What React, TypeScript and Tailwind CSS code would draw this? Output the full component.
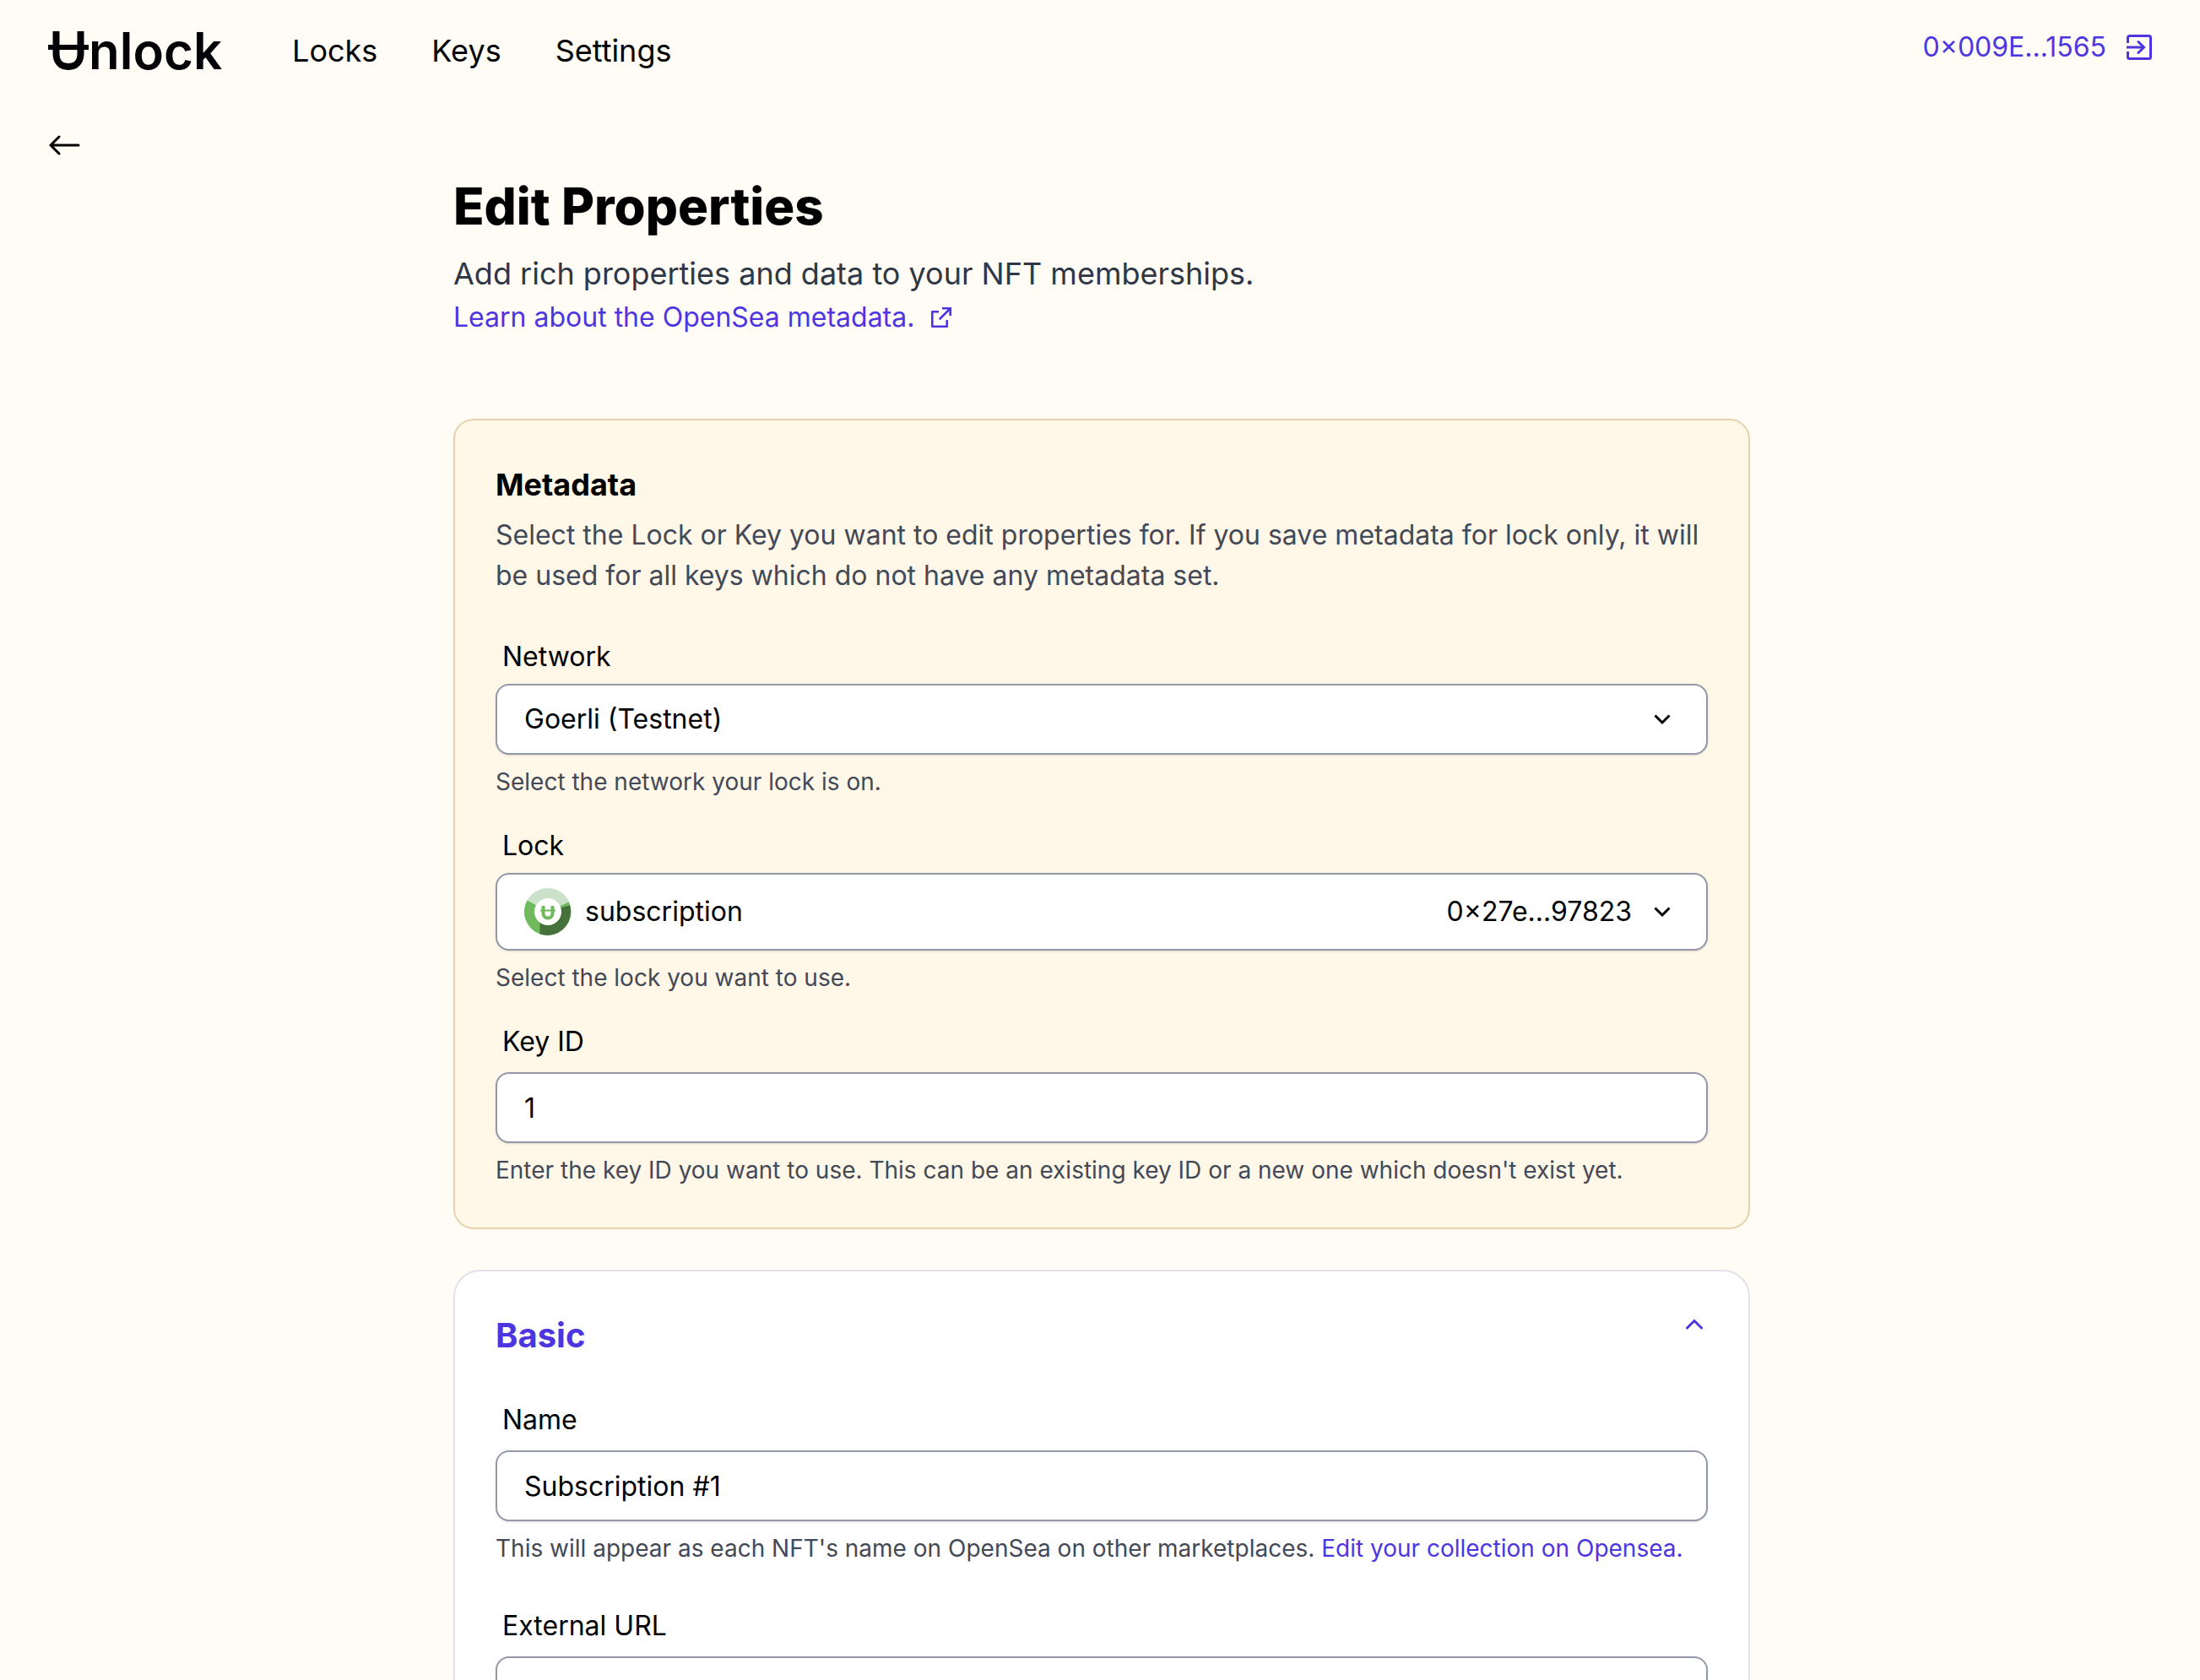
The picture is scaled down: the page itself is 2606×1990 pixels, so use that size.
import { useState, type ReactNode } from "react";

function Logo() {
  return (
    <a href="#home" aria-label="Unlock" className="flex items-end text-[#020207]">
      <svg viewBox="0 0 48 46" className="mb-3 h-[46px] w-12" fill="none" stroke="currentColor">
        <path d="M9.5 0V26.5C9.5 35 14 42 24 42S38.5 35 38.5 26.5V0" strokeWidth="8" />
        <path d="M0 19H48" strokeWidth="6" />
      </svg>
      <span className="text-[60px] leading-[70px] font-semibold">nlock</span>
    </a>
  );
}

function SignOutIcon() {
  return (
    <svg viewBox="0 0 30 30" className="size-[30px]" fill="none" stroke="currentColor" strokeWidth="3">
      <path d="M1.500 10V3.500A2 2 0 0 1 3.500 1.500H26.500A2 2 0 0 1 28.500 3.500V26.500A2 2 0 0 1 26.500 28.500H3.500A2 2 0 0 1 1.500 26.500V20" />
      <path d="M0 15H20" />
      <path d="M14 8.500L20.500 15L14 21.500" strokeLinecap="round" />
    </svg>
  );
}

function ExternalIcon() {
  return (
    <svg viewBox="0 0 24 24" className="size-6" fill="none" stroke="currentColor" strokeWidth="2.600">
      <path d="M9 5.300H1.300V22.700H18.700V15" strokeLinejoin="round" />
      <path d="M13 1.300H22.700V10" />
      <path d="M10.500 13.500L22 2" strokeLinecap="round" />
    </svg>
  );
}

function LockBadge() {
  return (
    <svg viewBox="0 0 56 56" className="size-14" fill="none">
      <circle cx="28" cy="28" r="28" fill="#cbe1c9" />
      <path d="M28 28L3.500 14.400A28 28 0 0 0 19 54.500Z" fill="#6fba5c" />
      <path d="M28 28L52.500 16.500A28 28 0 0 1 54 20Z" fill="#6fba5c" />
      <path d="M28 28L54 20A28 28 0 0 1 18.500 54.500V40Z" fill="#46713a" />
      <circle cx="28" cy="28" r="16" fill="#fff" />
      <path d="M22.500 21V30a5.500 5.500 0 0 0 11 0V21" stroke="#6fba5c" strokeWidth="4" />
      <path d="M19 26.500H37" stroke="#6fba5c" strokeWidth="2" />
    </svg>
  );
}

function Chevron() {
  return (
    <svg viewBox="0 0 20 13" className="h-[13px] w-5" fill="none" stroke="currentColor" strokeWidth="3">
      <path d="M1.500 1.500L10 10L18.500 1.500" />
    </svg>
  );
}

const control =
  "w-full rounded-2xl border-2 border-[#9399a8] bg-white px-8 text-[32px] leading-[48px] text-black shadow-sm outline-none";

function Field({ id, label, hint, gap, children }: { id: string; label: string; hint?: ReactNode; gap: string; children: ReactNode }) {
  return (
    <div className="flex flex-col">
      <label htmlFor={id} className={gap + " px-2 text-[32px] leading-[48px]"}>
        {label}
      </label>
      {children}
      {hint && <p className="mt-3 text-[28px] leading-10 text-[#434956]">{hint}</p>}
    </div>
  );
}

export default function App() {
  const [keyId, setKeyId] = useState("1");
  const [name, setName] = useState("Subscription #1");
  const [url, setUrl] = useState("");

  return (
    <div className="h-screen overflow-hidden bg-[#fffcf5] font-[Inter,sans-serif] text-black">
      <header className="flex items-start justify-between px-[57px] pt-[25px]">
        <div className="flex items-center">
          <Logo />
          <nav className="ml-[83px] flex gap-16 text-[36px] leading-[56px]">
            <a href="#locks">Locks</a>
            <a href="#keys">Keys</a>
            <a href="#settings">Settings</a>
          </nav>
        </div>
        <button className="mt-[7px] flex items-center gap-6 text-[32px] leading-[48px] text-[#4d36e0]">
          0×009E...1565
          <SignOutIcon />
        </button>
      </header>

      <div className="px-[57px] pt-[65px]">
        <button aria-label="Back" className="block">
          <svg viewBox="0 0 40 24" className="h-6 w-10" fill="none" stroke="currentColor" strokeWidth="3" strokeLinecap="round" strokeLinejoin="round">
            <path d="M13 2L3 12L13 22M3 12H36" />
          </svg>
        </button>
      </div>

      <main className="mx-auto w-full max-w-[1540px] pt-6 pl-1">
        <h1 className="text-[60px] leading-[72px] font-extrabold">Edit Properties</h1>
        <p className="mt-4 text-[36px] leading-[56px] text-[#2f3747]">Add rich properties and data to your NFT memberships.</p>
        <a href="#opensea" className="flex items-center gap-5 text-[32px] leading-[48px] text-[#4d36e0]">
          Learn about the OpenSea metadata.
          <ExternalIcon />
        </a>

        <section className="mt-24 rounded-3xl border-2 border-[#e5d3ae] bg-[#fff7e8] px-12 pt-12 pb-12">
          <h2 className="text-[36px] leading-[56px] font-bold">Metadata</h2>
          <p className="mt-2 text-[32px] leading-[48px] text-[#434956]">
            Select the Lock or Key you want to edit properties for. If you save metadata for lock only, it will be used for all keys which do not
            have any metadata set.
          </p>
          <div className="mt-12 flex flex-col gap-8">
            <Field id="network" label="Network" hint="Select the network your lock is on." gap="mb-2">
              <button id="network" className={control + " flex h-[84px] items-center justify-between pr-[42px] text-left"}>
                Goerli (Testnet)
                <Chevron />
              </button>
            </Field>
            <Field id="lock" label="Lock" hint="Select the lock you want to use." gap="mb-2">
              <button id="lock" className={control + " flex h-[92px] items-center pr-[42px] text-left"}>
                <LockBadge />
                <span className="ml-4 grow">subscription</span>
                <span className="mr-[26px]">0×27e...97823</span>
                <Chevron />
              </button>
            </Field>
            <Field
              id="key-id"
              label="Key ID"
              hint="Enter the key ID you want to use. This can be an existing key ID or a new one which doesn't exist yet."
              gap="mb-3"
            >
              <input id="key-id" value={keyId} onChange={(e) => setKeyId(e.target.value)} className={control + " h-[84px]"} />
            </Field>
          </div>
        </section>

        <section className="mt-12 rounded-[32px] border-2 border-[#e2e3e9] bg-white px-12 pt-12 pb-12">
          <button className="flex w-full items-start justify-between text-left text-[#4d36e0]">
            <span className="text-[40px] leading-[56px] font-bold">Basic</span>
            <svg viewBox="0 0 20 13" className="mt-2 mr-[6px] h-[13px] w-5" fill="none" stroke="currentColor" strokeWidth="3">
              <path d="M1.500 11L10 2.500L18.500 11" strokeLinecap="round" />
            </svg>
          </button>
          <div className="mt-12 flex flex-col gap-12">
            <Field
              id="name"
              label="Name"
              hint={
                <>
                  This will appear as each NFT's name on OpenSea on other marketplaces.{" "}
                  <a href="#collection" className="text-[#4d36e0]">
                    Edit your collection on Opensea.
                  </a>
                </>
              }
              gap="mb-3"
            >
              <input id="name" value={name} onChange={(e) => setName(e.target.value)} className={control + " h-[84px]"} />
            </Field>
            <Field id="url" label="External URL" gap="mb-3">
              <input id="url" value={url} onChange={(e) => setUrl(e.target.value)} className={control + " h-[84px]"} />
            </Field>
          </div>
        </section>
      </main>
    </div>
  );
}
